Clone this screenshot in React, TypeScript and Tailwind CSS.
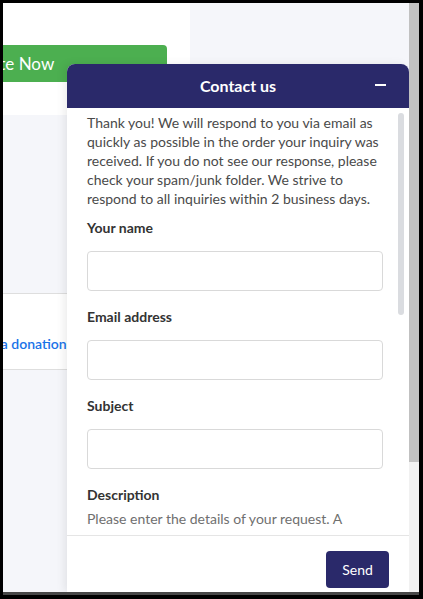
const fields = ['Your name', 'Email address', 'Subject'];

function ContactWidget() {
  return (
    <div className="absolute left-[64px] top-[61px] bottom-0 w-[342px] flex flex-col rounded-t-[8px] bg-white shadow-[-3px_0_8px_rgba(0,0,0,0.08)] overflow-hidden">
      {/* Header */}
      <div className="relative h-[44px] shrink-0 bg-[#2a296a] flex items-center justify-center">
        <span className="text-white font-bold text-[16px]">Contact us</span>
        <button className="absolute right-[23px] top-[20px] w-[11px] h-[2px] bg-white" aria-label="Minimize" />
      </div>

      {/* Scrolling body */}
      <div className="relative flex-1 overflow-hidden pl-[20px] pr-[26px] pt-[5px]">
        <p className="text-[14px] leading-[19px] text-[#4a4a4a]">
          Thank you! We will respond to you via email as quickly as possible in the order your inquiry was received. If you do not see our response, please check your spam/junk folder. We strive to respond to all inquiries within 2 business days.
        </p>
        {fields.map((label) => (
          <div key={label} className="mt-[10px] mb-[16px]">
            <label className="block text-[14px] leading-[20px] font-bold text-[#333333]">{label}</label>
            <input
              type="text"
              className="mt-[13px] block w-full h-[40px] rounded-[4px] border border-[#d9d9d9] bg-white px-3 outline-none"
            />
          </div>
        ))}
        <div className="mt-[10px]">
          <label className="block text-[14px] leading-[20px] font-bold text-[#333333]">Description</label>
          <div className="mt-[4px] h-[22px] overflow-hidden">
            <p className="text-[14px] leading-[19px] text-[#6f6f6f]">
              Please enter the details of your request. A member of our support staff will respond as soon as possible.
            </p>
          </div>
        </div>
        <div className="absolute right-[5px] top-[5px] w-[6px] h-[202px] rounded-full bg-[#dadce0]" />
      </div>

      {/* Footer */}
      <div className="h-[57px] shrink-0 border-t border-[#e5e5e5] bg-white flex items-start justify-end pr-[20px] pt-[15px]">
        <button className="w-[63px] h-[37px] rounded-[4px] bg-[#2a296a] text-white text-[14px]">Send</button>
      </div>
    </div>
  );
}

export default function App() {
  return (
    <div
      className="w-[423px] h-[599px] bg-black pt-[3px] pl-[3px] pr-[4px] pb-[4px] flex flex-col"
      style={{ fontFamily: 'Lato, "Noto Sans", sans-serif' }}
    >
      <div className="flex flex-1 min-h-0">
        {/* Page */}
        <div className="relative flex-1 bg-[#f5f6fa] overflow-hidden">
          <div className="w-[187px] h-[112px] bg-white pt-[42px]">
            <div className="h-[37px] w-[164px] bg-[#4caf50] rounded-r-[4px] flex items-center overflow-hidden">
              <span className="text-white text-[17px] whitespace-nowrap ml-[-44px]">Donate Now</span>
            </div>
          </div>
          <div className="mt-[178px] h-[77px] w-[64px] bg-white border-y border-[#dedede] pt-[40px] overflow-hidden">
            <span className="block text-[#1a73e8] text-[14px] font-semibold whitespace-nowrap ml-[-40px] leading-[20px]">Make a donation</span>
          </div>
          <ContactWidget />
        </div>
        {/* Browser scrollbar */}
        <div className="w-[10px] flex flex-col bg-[#f1f1f1]">
          <div className="h-[459px] bg-[#c1c1c1]" />
        </div>
      </div>
      <div className="h-[3px] bg-[#474747]" />
    </div>
  );
}
